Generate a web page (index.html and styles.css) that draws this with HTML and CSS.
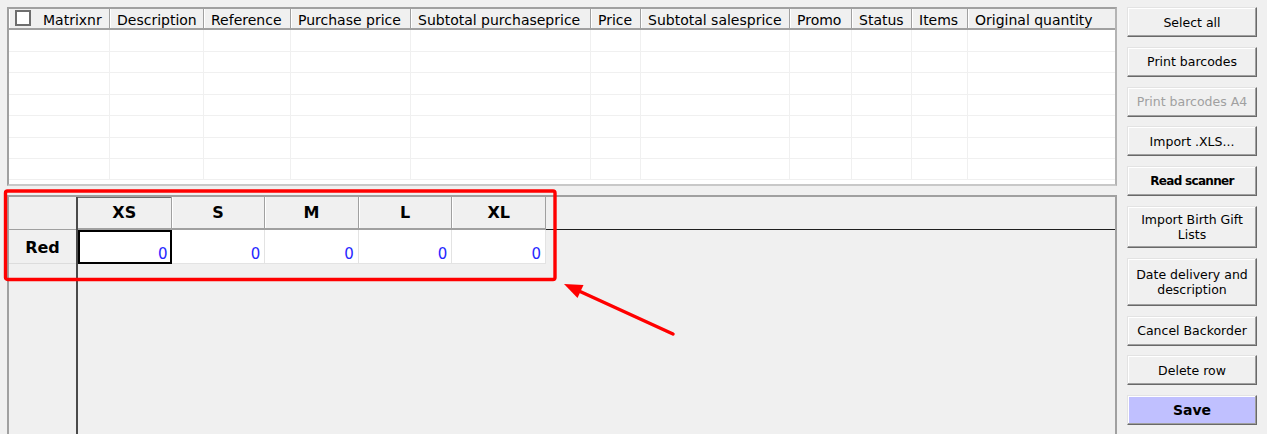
FILE: index.html
```html
<!DOCTYPE html>
<html lang="en">
<head>
  <meta charset="UTF-8" />
  <title>Matrix entry</title>
  <link rel="stylesheet" href="styles.css">
</head>
<body>
  <div class="screen">
    <div class="main">
      <!-- Article list -->
      <div class="list-frame">
        <table class="list">
          <colgroup>
            <col style="width:101px"><col style="width:94px"><col style="width:87px"><col style="width:120px">
            <col style="width:180px"><col style="width:50px"><col style="width:149px"><col style="width:62px">
            <col style="width:60px"><col style="width:56px"><col style="width:147px">
          </colgroup>
          <thead>
            <tr>
              <th class="first"><span class="check"></span>Matrixnr</th>
              <th>Description</th>
              <th>Reference</th>
              <th>Purchase price</th>
              <th>Subtotal purchaseprice</th>
              <th>Price</th>
              <th>Subtotal salesprice</th>
              <th>Promo</th>
              <th>Status</th>
              <th>Items</th>
              <th>Original quantity</th>
            </tr>
          </thead>
          <tbody>
            <tr><td></td><td></td><td></td><td></td><td></td><td></td><td></td><td></td><td></td><td></td><td></td></tr>
            <tr><td></td><td></td><td></td><td></td><td></td><td></td><td></td><td></td><td></td><td></td><td></td></tr>
            <tr><td></td><td></td><td></td><td></td><td></td><td></td><td></td><td></td><td></td><td></td><td></td></tr>
            <tr><td></td><td></td><td></td><td></td><td></td><td></td><td></td><td></td><td></td><td></td><td></td></tr>
            <tr><td></td><td></td><td></td><td></td><td></td><td></td><td></td><td></td><td></td><td></td><td></td></tr>
            <tr><td></td><td></td><td></td><td></td><td></td><td></td><td></td><td></td><td></td><td></td><td></td></tr>
            <tr><td></td><td></td><td></td><td></td><td></td><td></td><td></td><td></td><td></td><td></td><td></td></tr>
          </tbody>
        </table>
      </div>
      <!-- Size / colour matrix -->
      <div class="matrix">
        <div class="fixed-col">
          <div class="corner"></div>
          <div class="row-head">Red</div>
        </div>
        <div class="grid">
          <div class="size-row">
            <div class="size-head current">XS</div>
            <div class="size-head">S</div>
            <div class="size-head">M</div>
            <div class="size-head">L</div>
            <div class="size-head">XL</div>
            <div class="size-fill"></div>
          </div>
          <div class="qty-row">
            <div class="qty focus">0</div>
            <div class="qty">0</div>
            <div class="qty">0</div>
            <div class="qty">0</div>
            <div class="qty">0</div>
          </div>
        </div>
      </div>
    </div>
    <div class="buttons">
      <button class="btn">Select all</button>
      <button class="btn">Print barcodes</button>
      <button class="btn" disabled>Print barcodes A4</button>
      <button class="btn">Import .XLS...</button>
      <button class="btn bold">Read scanner</button>
      <button class="btn tall">Import Birth Gift Lists</button>
      <button class="btn taller">Date delivery and description</button>
      <button class="btn">Cancel Backorder</button>
      <button class="btn">Delete row</button>
      <button class="btn save">Save</button>
    </div>
  </div>
  <!-- Red annotation over the screenshot -->
  <svg class="annotation" width="1267" height="434" viewBox="0 0 1267 434">
    <rect x="5.5" y="191" width="549.5" height="88.5" rx="2" fill="none" stroke="#ff0000" stroke-width="3.4"/>
    <line x1="673" y1="334" x2="579" y2="291" stroke="#ff0000" stroke-width="3.5" stroke-linecap="round"/>
    <polygon points="564,284 583.5,285 577.5,298" fill="#ff0000"/>
  </svg>
</body>
</html>
```

FILE: styles.css
```css
body {
  margin: 0;
  background: #f0f0f0;
  font-family: "DejaVu Sans", Verdana, sans-serif;
  color: #000;
  position: relative;
  height: 434px;
  overflow: hidden;
}
.screen {
  display: flex;
  gap: 10px;
  padding: 7px 10px 0 7px;
  height: 434px;
  box-sizing: border-box;
}
.main {
  width: 1110px;
  display: flex;
  flex-direction: column;
  gap: 9px;
}
/* Article list */
.list-frame {
  height: 179px;
  box-sizing: border-box;
  border: 2px solid #a0a0a0;
  border-right-color: #b4b4b4;
  border-bottom-color: #c8c8c8;
  background: #fff;
  overflow: hidden;
}
.list {
  width: 1106px;
  table-layout: fixed;
  border-collapse: separate;
  border-spacing: 0;
}
.list th {
  height: 19px;
  padding: 4px 0 0 7px;
  line-height: 15px;
  font-size: 14px;
  font-weight: normal;
  text-align: left;
  white-space: nowrap;
  overflow: hidden;
  background: #f0f0f0;
  border-right: 1px solid #a0a0a0;
  border-bottom: 2px solid #a0a0a0;
  box-shadow: inset 1px 0 #fff;
  box-sizing: border-box;
  vertical-align: top;
}
.list th.first {
  padding-left: 6px;
}
.list th:last-child {
  border-right: none;
}
.check {
  display: inline-block;
  width: 16px;
  height: 16px;
  box-sizing: border-box;
  border: 2px solid #6e6e6e;
  background: #fff;
  margin: -3px 12px 0 0;
  vertical-align: top;
}
.list tr {
  height: 21.43px;
}
.list td {
  border-right: 1px solid #f0f0f0;
  border-bottom: 1px solid #f0f0f0;
  padding: 0;
}
.list td:last-child {
  border-right: none;
}
/* Size / colour matrix */
.matrix {
  flex: 1;
  min-height: 0;
  display: flex;
  border: 2px solid #a0a0a0;
  border-bottom: none;
  background: #f0f0f0;
}
.fixed-col {
  width: 67px;
  border-right: 2px solid #4a4a4a;
  flex-shrink: 0;
}
.corner {
  height: 32px;
  border-bottom: 1px solid #a0a0a0;
}
.row-head {
  height: 34px;
  box-sizing: border-box;
  padding-top: 2px;
  border-bottom: 1px solid #dcdcdc;
  font-weight: bold;
  font-size: 16px;
  line-height: 32px;
  text-align: center;
}
.grid {
  flex: 1;
}
.size-row {
  display: flex;
  height: 33px;
}
.size-head {
  flex: 0 0 93.6px;
  box-sizing: border-box;
  border-right: 1px solid #a0a0a0;
  border-bottom: 2px solid #a0a0a0;
  box-shadow: inset 1px 0 #fff;
  font-weight: bold;
  font-size: 16px;
  line-height: 31px;
  text-align: center;
}
.size-head.current {
  box-shadow: inset 0 1px #6a6a6a;
}
.size-fill {
  flex: 1;
  border-bottom: 1px solid #1e1e1e;
}
.qty-row {
  display: flex;
  height: 34px;
}
.qty {
  flex: 0 0 93.6px;
  box-sizing: border-box;
  background: #fff;
  border-right: 1px solid #e3e3e3;
  border-bottom: 1px solid #e3e3e3;
  padding: 0 4px 1px 0;
  display: flex;
  align-items: flex-end;
  justify-content: flex-end;
  font-size: 15px;
  line-height: 15px;
  color: #2828ff;
}
.qty.focus {
  border: 2px solid #000;
  padding: 0 2px 0 0;
}
/* Buttons column */
.buttons {
  width: 130px;
  display: flex;
  flex-direction: column;
  gap: 9.8px;
}
.btn {
  height: 30px;
  flex-shrink: 0;
  padding: 0 4px;
  box-sizing: border-box;
  background: #f0f0f0;
  border: 1px solid;
  border-color: #e3e3e3 #696969 #696969 #e3e3e3;
  box-shadow: inset -1px -1px #a0a0a0, inset 1px 1px #fff;
  font-family: "DejaVu Sans", Verdana, sans-serif;
  font-size: 12.5px;
  line-height: 15px;
  color: #000;
  text-align: center;
}
.btn:disabled {
  color: #a0a0a0;
}
.btn.bold {
  font-weight: bold;
  font-size: 12px;
  letter-spacing: -0.7px;
}
.btn.tall {
  height: 42px;
}
.btn.taller {
  height: 48px;
}
.btn.save {
  background: #c0c0ff;
  font-weight: bold;
  font-size: 14px;
}
.annotation {
  position: absolute;
  top: 0;
  left: 0;
  pointer-events: none;
}
```
